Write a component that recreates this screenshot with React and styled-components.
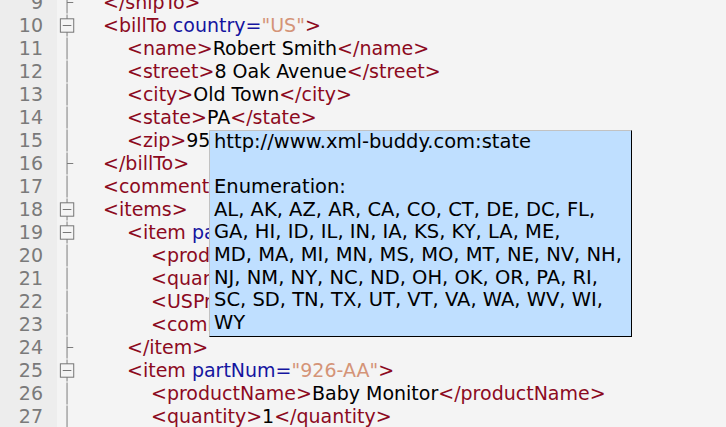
import React from "react";
import styled, { createGlobalStyle } from "styled-components";

const GlobalStyle = createGlobalStyle`
  html, body {
    margin: 0;
    padding: 0;
    background: #f4f4f4;
    overflow: hidden;
  }
`;

// each part: [kind, text]  t = tag markup, a = attribute name, v = attribute value, x = text
const lines = [
  { n: 9, level: 1, fold: "end", parts: [["t", "</shipTo>"]] },
  { n: 10, level: 1, fold: "open", parts: [["t", "<billTo "], ["a", "country="], ["v", '"US"'], ["t", ">"]] },
  { n: 11, level: 2, parts: [["t", "<name>"], ["x", "Robert Smith"], ["t", "</name>"]] },
  { n: 12, level: 2, parts: [["t", "<street>"], ["x", "8 Oak Avenue"], ["t", "</street>"]] },
  { n: 13, level: 2, parts: [["t", "<city>"], ["x", "Old Town"], ["t", "</city>"]] },
  { n: 14, level: 2, parts: [["t", "<state>"], ["x", "PA"], ["t", "</state>"]] },
  { n: 15, level: 2, parts: [["t", "<zip>"], ["x", "95819"], ["t", "</zip>"]] },
  { n: 16, level: 1, fold: "end", parts: [["t", "</billTo>"]] },
  { n: 17, level: 1, parts: [["t", "<comment>"], ["x", "Hurry, my lawn is going wild!"], ["t", "</comment>"]] },
  { n: 18, level: 1, fold: "open", parts: [["t", "<items>"]] },
  { n: 19, level: 2, fold: "open", parts: [["t", "<item "], ["a", "partNum="], ["v", '"872-AA"'], ["t", ">"]] },
  { n: 20, level: 3, parts: [["t", "<productName>"], ["x", "Lawnmower"], ["t", "</productName>"]] },
  { n: 21, level: 3, parts: [["t", "<quantity>"], ["x", "1"], ["t", "</quantity>"]] },
  { n: 22, level: 3, parts: [["t", "<USPrice>"], ["x", "148.95"], ["t", "</USPrice>"]] },
  { n: 23, level: 3, parts: [["t", "<comment>"], ["x", "Confirm this is electric"], ["t", "</comment>"]] },
  { n: 24, level: 2, fold: "end", parts: [["t", "</item>"]] },
  { n: 25, level: 2, fold: "open", parts: [["t", "<item "], ["a", "partNum="], ["v", '"926-AA"'], ["t", ">"]] },
  { n: 26, level: 3, parts: [["t", "<productName>"], ["x", "Baby Monitor"], ["t", "</productName>"]] },
  { n: 27, level: 3, parts: [["t", "<quantity>"], ["x", "1"], ["t", "</quantity>"]] },
  { n: 28, level: 3, parts: [["t", "<USPrice>"], ["x", "39.98"], ["t", "</USPrice>"]] },
];

const tipLines = [
  "http://www.xml-buddy.com:state",
  "",
  "Enumeration:",
  "AL, AK, AZ, AR, CA, CO, CT, DE, DC, FL,",
  "GA, HI, ID, IL, IN, IA, KS, KY, LA, ME,",
  "MD, MA, MI, MN, MS, MO, MT, NE, NV, NH,",
  "NJ, NM, NY, NC, ND, OH, OK, OR, PA, RI,",
  "SC, SD, TN, TX, UT, VT, VA, WA, WV, WI,",
  "WY",
];

const FoldMark = ({ fold }) => (
  <svg width="23" height="23" viewBox="0 0 23 23">
    <line x1="10.5" y1="0" x2="10.5" y2="23" stroke="#777" strokeWidth="1" />
    {fold === "end" && (
      <line x1="10.5" y1="11.5" x2="17" y2="11.5" stroke="#777" strokeWidth="1" />
    )}
    {fold === "open" && (
      <>
        <rect x="3.5" y="4.5" width="14" height="14" fill="#f4f4f4" stroke="#707070" />
        <line x1="6" y1="11.5" x2="15" y2="11.5" stroke="#707070" />
      </>
    )}
  </svg>
);

const App = () => {
  return (
    <>
      <GlobalStyle />
      <Editor>
        <Lines>
          {lines.map((l) => (
            <Row key={l.n}>
              <LineNo>{l.n}</LineNo>
              <FoldCell>
                <FoldMark fold={l.fold} />
              </FoldCell>
              <Code $level={l.level}>
                {l.parts.map(([k, s], i) => (
                  <Token key={i} $kind={k}>
                    {s}
                  </Token>
                ))}
              </Code>
            </Row>
          ))}
        </Lines>
        <Tooltip>
          {tipLines.map((t, i) => (
            <TipLine key={i}>{t || "\u00a0"}</TipLine>
          ))}
        </Tooltip>
      </Editor>
    </>
  );
};

export default App;

const colors = {
  t: "#8c0a1e",
  a: "#1414a0",
  v: "#d49478",
  x: "#000000",
};

const Editor = styled.div`
  position: relative;
  width: 726px;
  height: 427px;
  overflow: hidden;
  background: #f4f4f4;
  font-family: "DejaVu Sans", "Liberation Sans", sans-serif;
  font-size: 19px;
`;

const Lines = styled.div`
  display: flex;
  flex-direction: column;
  margin-top: -9px;
`;

const Row = styled.div`
  display: flex;
  height: 23px;
  align-items: stretch;
`;

const LineNo = styled.div`
  width: 57px;
  flex: none;
  box-sizing: border-box;
  padding-right: 14px;
  text-align: right;
  background: #ededed;
  color: #7a7a7a;
  line-height: 23px;
`;

const FoldCell = styled.div`
  width: 22px;
  flex: none;
  display: flex;
  svg {
    display: block;
  }
`;

const Code = styled.div`
  padding-left: ${(p) => p.$level * 24}px;
  line-height: 23px;
  white-space: pre;
`;

const Token = styled.span`
  color: ${(p) => colors[p.$kind]};
`;

const Tooltip = styled.div`
  position: absolute;
  left: 209px;
  top: 130px;
  width: 423px;
  height: 207px;
  box-sizing: border-box;
  padding: 0 0 0 4px;
  background: #bfdfff;
  border-top: 1px solid #c2c2c2;
  border-left: 1px solid #c2c2c2;
  border-right: 1px solid #000;
  border-bottom: 1px solid #000;
  color: #000;
  font-size: 19.5px;
`;

const TipLine = styled.div`
  line-height: 22.6px;
  white-space: pre;
`;
